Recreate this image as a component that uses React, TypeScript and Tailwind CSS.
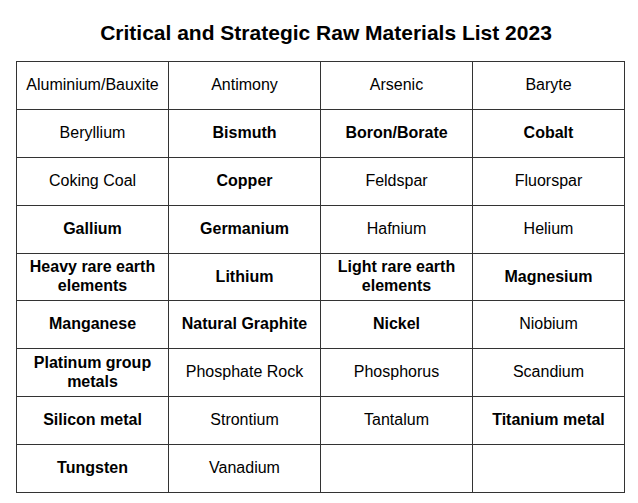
import React from "react";

type Cell = { t: string; b?: boolean };

const rows: Cell[][] = [
  [{ t: "Aluminium/Bauxite" }, { t: "Antimony" }, { t: "Arsenic" }, { t: "Baryte" }],
  [{ t: "Beryllium" }, { t: "Bismuth", b: true }, { t: "Boron/Borate", b: true }, { t: "Cobalt", b: true }],
  [{ t: "Coking Coal" }, { t: "Copper", b: true }, { t: "Feldspar" }, { t: "Fluorspar" }],
  [{ t: "Gallium", b: true }, { t: "Germanium", b: true }, { t: "Hafnium" }, { t: "Helium" }],
  [{ t: "Heavy rare earth elements", b: true }, { t: "Lithium", b: true }, { t: "Light rare earth elements", b: true }, { t: "Magnesium", b: true }],
  [{ t: "Manganese", b: true }, { t: "Natural Graphite", b: true }, { t: "Nickel", b: true }, { t: "Niobium" }],
  [{ t: "Platinum group metals", b: true }, { t: "Phosphate Rock" }, { t: "Phosphorus" }, { t: "Scandium" }],
  [{ t: "Silicon metal", b: true }, { t: "Strontium" }, { t: "Tantalum" }, { t: "Titanium metal", b: true }],
  [{ t: "Tungsten", b: true }, { t: "Vanadium" }, { t: "" }, { t: "" }],
];

export default function App() {
  return (
    <div
      className="w-[638px] h-[503px] bg-white text-black"
      style={{ fontFamily: '"Liberation Sans", Arial, sans-serif' }}
    >
      <div className="pt-[19px] h-[61px] pl-[14px]">
        <h1 className="text-center font-bold text-[21px] leading-[28px]">
          Critical and Strategic Raw Materials List 2023
        </h1>
      </div>
      <div className="ml-[16px] w-[609px] grid grid-cols-4 border-l border-t border-[#333]">
        {rows.flat().map((c, i) => (
          <div
            key={i}
            className={
              "h-[47.9px] flex items-center justify-center text-center px-[6px] pb-[2px] text-[16px] leading-[19px] border-r border-b border-[#333] " +
              (c.b ? "font-bold" : "font-normal")
            }
          >
            {c.t}
          </div>
        ))}
      </div>
    </div>
  );
}
